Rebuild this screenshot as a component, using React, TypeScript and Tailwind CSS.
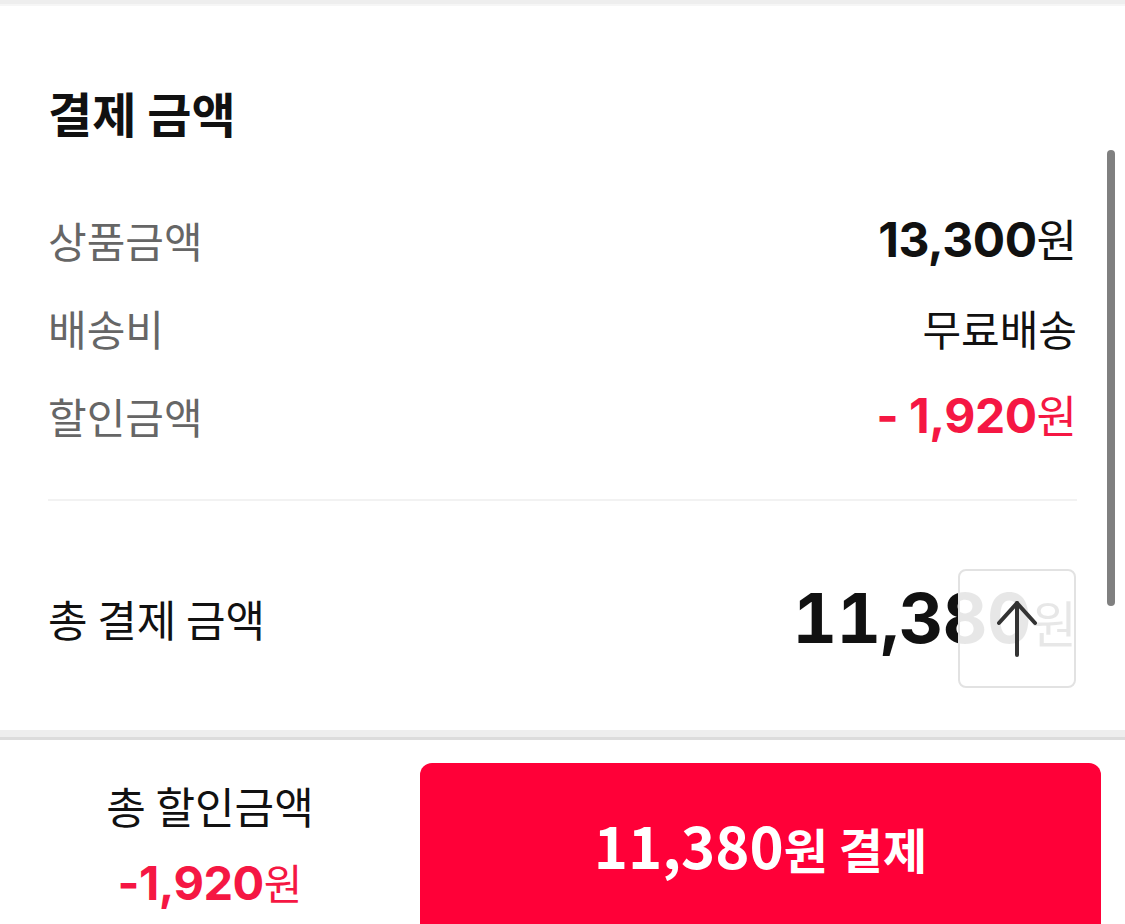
import React from "react";

const KR = "font-['Noto_Sans_CJK_KR',sans-serif]";
const NUM = "font-['Inter','Noto_Sans_CJK_KR',sans-serif]";

function Row({ label, children }: { label: string; children: React.ReactNode }) {
  return (
    <div className="flex h-[88px] items-center justify-between">
      <span className="text-[42px] leading-none text-[#666666]">{label}</span>
      {children}
    </div>
  );
}

export default function App() {
  return (
    <div className={`relative flex h-[924px] w-[1125px] flex-col overflow-hidden bg-white ${KR}`}>
      <div className="h-[4px] shrink-0 bg-[#eeeeee]" />
      <div className="h-[2px] shrink-0 bg-[#f6f6f6]" />

      <section className="flex h-[724px] shrink-0 flex-col px-[48px] pt-[76px]">
        <div className="flex h-[60px] items-center">
          <h1 className="text-[48px] font-bold leading-none text-[#111111]">결제 금액</h1>
        </div>

        <div className="mt-[54px] flex flex-col">
          <Row label="상품금액">
            <span className="flex items-baseline text-[#111111]">
              <span className={`${NUM} text-[48px] font-bold leading-none tracking-[-0.5px]`}>13,300</span>
              <span className="text-[44px] leading-none">원</span>
            </span>
          </Row>
          <Row label="배송비">
            <span className="text-[42px] leading-none text-[#111111]">무료배송</span>
          </Row>
          <Row label="할인금액">
            <span className="flex items-baseline text-[#f51743]">
              <span className={`${NUM} text-[48px] font-bold leading-none tracking-[-0.5px]`}>- 1,920</span>
              <span className="text-[44px] leading-none">원</span>
            </span>
          </Row>
        </div>

        <div className="mt-[39px] h-[2px] bg-[#f2f2f2]" />

        <div className="mt-[57px] flex h-[120px] items-center justify-between">
          <span className="text-[43px] leading-none text-[#111111]">총 결제 금액</span>
          <span className="flex items-baseline text-[#111111]">
            <span className={`${NUM} text-[69px] font-bold tabular-nums leading-none tracking-[-0.5px]`}>11,380</span>
            <span className="text-[50px] leading-none">원</span>
          </span>
        </div>
      </section>

      <div className="h-[7px] shrink-0 bg-[#eeeeee]" />
      <div className="h-[3px] shrink-0 bg-[#dcdcdc]" />

      <div className="flex h-[184px] shrink-0">
        <div className="flex w-[420px] flex-col items-center pt-[44px]">
          <span className="text-[43px] leading-none text-[#111111]">총 할인금액</span>
          <span className="mt-[32px] flex items-baseline text-[#f51743]">
            <span className={`${NUM} text-[47px] font-bold leading-none tracking-[-0.5px]`}>-1,920</span>
            <span className="text-[42px] leading-none">원</span>
          </span>
        </div>
        <div className="pt-[23px]">
          <button className="flex h-[174px] w-[681px] items-center justify-center rounded-[12px] bg-[#ff0038] pb-[12px] text-white">
            <span className="flex items-baseline">
              <span className="text-[58px] font-bold leading-none">11,380</span>
              <span className="text-[48px] font-bold leading-none">원 결제</span>
            </span>
          </button>
        </div>
      </div>

      {/* scroll to top button */}
      <div className="absolute left-[958px] top-[569px] flex h-[119px] w-[118px] items-center justify-center rounded-[8px] border-2 border-[#e2e2e2] bg-white/90">
        <svg width="60" height="80" viewBox="0 0 60 80" fill="none" stroke="#333333" strokeWidth="4" strokeLinecap="round" strokeLinejoin="round">
          <path d="M30 14 V66" />
          <path d="M12 34 L30 14 L48 34" />
        </svg>
      </div>

      {/* scrollbar */}
      <div className="absolute left-[1107px] top-[150px] h-[456px] w-[8px] rounded-full bg-[#808080]" />
    </div>
  );
}
